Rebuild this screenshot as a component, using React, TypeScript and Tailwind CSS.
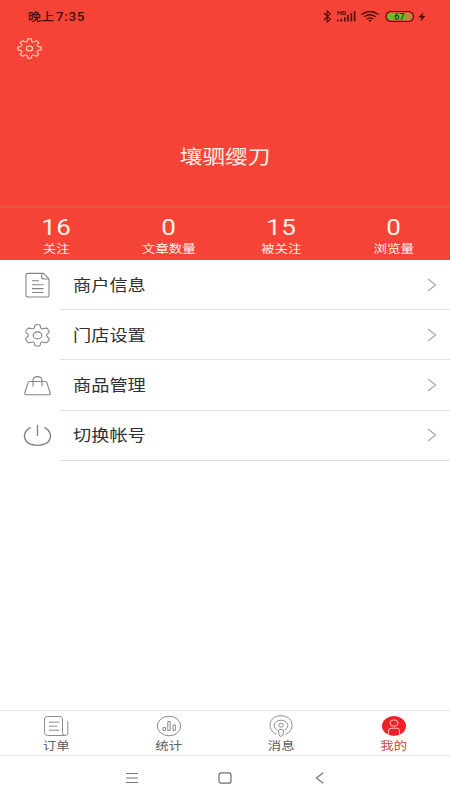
import type { ReactNode } from "react";

type Stat = { value: string; label: string };
type MenuItem = { label: string; icon: ReactNode };
type Tab = { label: string; icon: ReactNode; active?: boolean };

function SettingsIcon() {
  return (
    <svg
      width="25"
      height="21"
      viewBox="-12.5 -12.5 25 25"
      preserveAspectRatio="none"
      fill="none"
      stroke="#ffd9c4"
      strokeWidth="1.15"
      strokeLinejoin="round"
    >
      {/* one tooth with its valley, turned round the centre */}
      {[0, 45, 90, 135, 180, 225, 270, 315].map((deg) => (
        <path
          key={deg}
          transform={`rotate(${deg})`}
          d="M-3.25 -7.85Q-2.3 -8 -2.1 -9.3L-1.8 -11.5H1.8L2.1 -9.3Q2.3 -8 3.25 -7.85"
        />
      ))}
      <circle r="3.1" />
    </svg>
  );
}

function StatusBar() {
  return (
    <div className="flex h-[33px] items-center justify-between pl-7 pr-[23px] text-[#4a0c0a]">
      <div className="flex origin-center scale-y-90 items-center text-[13px] font-medium leading-none">
        <span>晚上</span>
        <span className="ml-[2px] font-['Roboto','Noto_Sans_CJK_SC',sans-serif] text-[13.5px] tracking-[0.6px]">
          7:35
        </span>
      </div>
      <svg width="105" height="18" viewBox="0 0 105 18" fill="none" stroke="currentColor">
        <path d="M2 5L8.3 11.2L5.2 14V3L8.3 5.8L2 12" strokeWidth="1.1" />
        <text
          x="15"
          y="6.6"
          fontSize="5.8"
          fontWeight="700"
          fontFamily="Roboto, sans-serif"
          textLength="9"
          lengthAdjust="spacingAndGlyphs"
          fill="currentColor"
          stroke="none"
        >
          HD
        </text>
        <path
          d="M16 11.8V13.5M19.4 10.8V13.5M22.8 9V13.5M26 7V13.5M29.4 5V13.5M32.6 3V13.5"
          strokeWidth="1.6"
        />
        <path d="M39.5 6.5Q48 .5 56.5 6.5M42.3 8.8Q48 4.7 53.7 8.8M45 11Q48 8.8 51 11" strokeWidth="1.4" />
        <path d="M46.4 12.2Q48 11.2 49.6 12.2L48 14Z" fill="currentColor" stroke="none" />
        <rect x="64" y="3.5" width="27.5" height="10" rx="5" strokeWidth="1.1" />
        <path d="M69 4.7H83.5V12.3H69A3.8 3.8 0 0 1 69 4.7Z" fill="#6cb92d" stroke="none" />
        <path d="M83.5 4.7H86.5A3.8 3.8 0 0 1 86.5 12.3H83.5Z" fill="#b98a36" stroke="none" />
        <text
          x="72.3"
          y="11.7"
          fontSize="9"
          fontWeight="500"
          fontFamily="Roboto, sans-serif"
          fill="#173d12"
          stroke="none"
        >
          67
        </text>
        <path d="M101.7 4L96.3 9.6L99.8 9.4L98.3 13.8L103.6 7.7L100.3 8Z" fill="currentColor" stroke="none" />
      </svg>
    </div>
  );
}

const STATS: Stat[] = [
  { value: "16", label: "关注" },
  { value: "0", label: "文章数量" },
  { value: "15", label: "被关注" },
  { value: "0", label: "浏览量" },
];

const MENU: MenuItem[] = [
  {
    label: "商户信息",
    icon: (
      <>
        <path d="M19 2.4H5Q3 2.4 3 4.4V24Q3 26 5 26H24Q26 26 26 24V7.9L20.5 2.4Z" />
        <path d="M18.7 2.4V6Q18.7 8 21 8H26M9 9.7H16M9 13.7H20.5M9 17.6H20.5M9 21.5H20.5" />
      </>
    ),
  },
  {
    label: "门店设置",
    icon: (
      <>
        <path d="M11.2 7Q11.6 6.4 11.8 4.6Q12 3.8 13 3.8H16Q17 3.8 17.2 4.6Q17.4 6.4 17.8 7Q18.4 8 19.6 7.7L23 7.1Q24.1 7 24.5 7.8L26 10Q26.5 10.9 25.8 11.6L24 13.3Q23.2 14.4 24 15.5L25.8 17.2Q26.5 18 26 18.9L24.5 21Q24.1 21.8 23 21.7L19.6 21.1Q18.4 20.8 17.8 21.8Q17.4 22.4 17.2 24.2Q17 25 16 25H13Q12 25 11.8 24.2Q11.6 22.4 11.2 21.8Q10.6 20.8 9.4 21.1L6 21.7Q4.9 21.8 4.5 21L3 18.9Q2.5 18 3.2 17.2L5 15.5Q5.8 14.4 5 13.3L3.2 11.6Q2.5 10.9 3 10L4.5 7.8Q4.9 7 6 7.1L9.4 7.7Q10.6 8 11.2 7Z" />
        <ellipse cx="14.5" cy="14.4" rx="4.3" ry="3.5" />
      </>
    ),
  },
  {
    label: "商品管理",
    icon: (
      <>
        <path d="M6.8 10.5H22.2Q23.5 10.5 23.9 11.7L27.2 22Q27.5 23.8 25.8 23.8H3.2Q1.5 23.8 1.8 22L5.1 11.7Q5.5 10.5 6.8 10.5Z" />
        <path d="M10 15.5V9.5Q10.2 5.6 14.5 5.6T19 9.5V15.5" />
      </>
    ),
  },
  {
    label: "切换帐号",
    icon: (
      <path
        d="M14.5 3.8V15M7.6 6.4C-2.2 11 -.6 24.2 14.5 24.4C29.6 24.2 31.2 11 21.4 6.4"
        strokeWidth="1.4"
      />
    ),
  },
];

const TABS: Tab[] = [
  {
    label: "订单",
    icon: (
      <>
        <path d="M4.5 2.5H17Q19.5 2.5 19.5 5V18.5Q19.5 21.5 22 21.5H4.5Q1.5 21.5 1.5 18.5V5Q1.5 2.5 4.5 2.5ZM22 21.5Q24.8 21.5 24.8 18.5V7" />
        <path d="M6 8.2H16.5M6 12.2H14.5M6 16.2H16.5" />
      </>
    ),
  },
  {
    label: "统计",
    icon: (
      <>
        <ellipse cx="13" cy="12" rx="11.6" ry="9.8" />
        <path d="M7 13.5H9.5V16.5H7ZM11.8 7.5H14.2V16.5H11.8ZM17 11H19.3V16.5H17Z" />
      </>
    ),
  },
  {
    label: "消息",
    icon: (
      <>
        <path d="M8.5 20.4C-1.7 16 .2 1.7 13 1.7S27.7 16 17.5 20.4" />
        <path d="M9.4 16.2C3.5 12.7 6.2 6.2 13 6.2S22.5 12.7 16.6 16.2" />
        <ellipse cx="13" cy="11.2" rx="2.3" ry="1.9" />
        <path d="M10.3 17Q10.5 15.3 13 15.3T15.7 17L14.9 20.6Q14.7 22.3 13 22.3T11.1 20.6Z" />
      </>
    ),
  },
  {
    label: "我的",
    active: true,
    icon: (
      <>
        <ellipse cx="13" cy="12" rx="12" ry="9.9" fill="#f02028" stroke="none" />
        <g stroke="#ffc8c0">
          <ellipse cx="13" cy="9" rx="4" ry="3.2" />
          <path d="M7.5 20.7V17Q7.5 14.2 10.3 14.2H15.7Q18.5 14.2 18.5 17V20.7" />
        </g>
      </>
    ),
  },
];

export default function App() {
  return (
    <div className="flex h-[800px] w-[450px] flex-col overflow-hidden bg-[#fefffe] font-['Noto_Sans_CJK_SC',sans-serif]">
      <header className="flex h-[260px] flex-col bg-[#f54437]">
        <StatusBar />
        <div className="h-[30px] pl-[17px] pt-[5px]">
          <SettingsIcon />
        </div>
        <div className="flex h-[143px] justify-center pt-[77px]">
          <h1 className="h-[32px] scale-y-[.87] text-[22.7px] font-normal leading-[32px] text-[#fff0e5]">
            壤驷缨刀
          </h1>
        </div>
        <div className="grid h-[54px] grid-cols-4 border-t-2 border-[#dd5b40] text-center text-[#fff3e8]">
          {STATS.map((s) => (
            <div key={s.label} className="flex flex-col items-center pt-[5px]">
              <span className="h-[28px] scale-y-[.86] font-['Roboto',sans-serif] text-[26px] leading-[28px] tracking-[0.3px]">
                {s.value}
              </span>
              <span className="-mt-px h-4 scale-y-[.87] text-[13.5px] leading-4">{s.label}</span>
            </div>
          ))}
        </div>
      </header>

      <nav className="flex flex-1 flex-col">
        {MENU.map((item) => (
          <div key={item.label} className="flex h-[50.2px] w-full items-center">
            <div className="flex w-[60px] pl-[23px]">
              <svg width="29" height="29" viewBox="0 0 29 29" fill="none" stroke="#858585" strokeWidth="1.1" strokeLinejoin="round">
                {item.icon}
              </svg>
            </div>
            <div className="flex h-full flex-1 items-center justify-between border-b border-[#dfe1df] pl-[13px] pr-[13px]">
              <span className="mb-[2px] scale-y-[.87] text-[18.2px] leading-6 text-[#303030]">
                {item.label}
              </span>
              <svg width="10" height="14" viewBox="0 0 10 14" fill="none" stroke="#a5a5a5" strokeWidth="1.1">
                <path d="M1 1L8.6 7L1 13" />
              </svg>
            </div>
          </div>
        ))}
      </nav>

      <div className="grid h-[46px] grid-cols-4 border-y border-[#e5e6e5]">
        {TABS.map((tab) => (
          <div
            key={tab.label}
            className={`flex flex-col items-center pt-[3px] ${tab.active ? "text-[#c74a43]" : "text-[#606060]"}`}
          >
            <svg width="26" height="24" viewBox="0 0 26 24" fill="none" stroke="#8d8d8d" strokeWidth="1">
              {tab.icon}
            </svg>
            <span className="-mt-px h-4 scale-y-[.87] text-[13.4px] leading-4">{tab.label}</span>
          </div>
        ))}
      </div>

      <div className="flex h-[44px] justify-between px-[125px] pt-[15px]">
        <svg width="14" height="14" viewBox="0 0 14 14" fill="none" stroke="#777" strokeWidth="1.1">
          <path d="M1 2.5H13M1 7H13M1 11.5H13" />
        </svg>
        <svg width="14" height="14" viewBox="0 0 14 14" fill="none" stroke="#6e6e6e" strokeWidth="1.2">
          <rect x="1" y="1.8" width="12" height="10.4" rx="2.3" />
        </svg>
        <svg width="14" height="14" viewBox="0 0 14 14" fill="none" stroke="#777" strokeWidth="1.2">
          <path d="M12.3 1.8L5.4 7L12.3 12.2" />
        </svg>
      </div>
    </div>
  );
}
